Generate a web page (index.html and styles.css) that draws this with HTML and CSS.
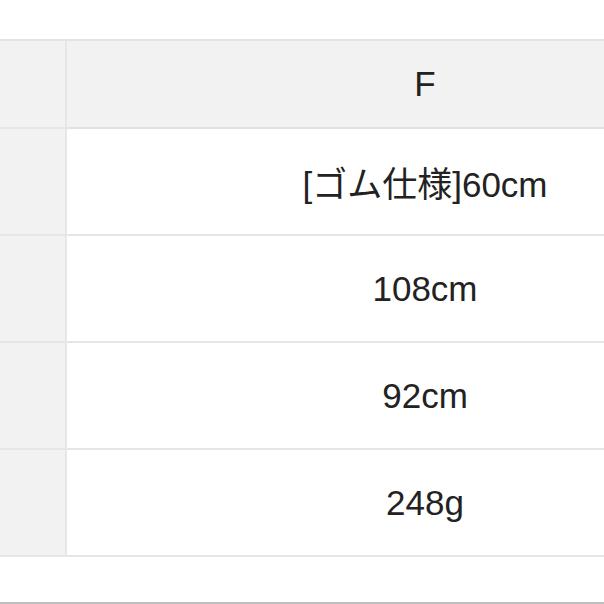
FILE: index.html
```html
<!DOCTYPE html>
<html lang="ja">
<head>
<meta charset="utf-8">
<title>サイズ表</title>
<link rel="stylesheet" href="styles.css">
</head>
<body>
<div class="page">
  <table class="size-table">
    <colgroup>
      <col class="col-label">
      <col class="col-value">
    </colgroup>
    <thead>
      <tr class="head-row">
        <th class="label"></th>
        <th class="value head">F</th>
      </tr>
    </thead>
    <tbody>
      <tr class="row">
        <th class="label"></th>
        <td class="value">[ゴム仕様]60cm</td>
      </tr>
      <tr class="row">
        <th class="label"></th>
        <td class="value">108cm</td>
      </tr>
      <tr class="row">
        <th class="label"></th>
        <td class="value">92cm</td>
      </tr>
      <tr class="row">
        <th class="label"></th>
        <td class="value">248g</td>
      </tr>
    </tbody>
  </table>
  <div class="bottom-rule"></div>
</div>
</body>
</html>
```
FILE: styles.css
```css
html, body {
  margin: 0;
  padding: 0;
  background: #ffffff;
  overflow: hidden;
}

.page {
  width: 604px;
  height: 604px;
  overflow: hidden;
  padding-top: 39px;
  box-sizing: border-box;
  display: flex;
  flex-direction: column;
  font-family: "Liberation Sans", "Noto Sans CJK JP", sans-serif;
  color: #222222;
}

.size-table {
  border-collapse: separate;
  border-spacing: 0;
  table-layout: fixed;
  width: 783px;
  flex: none;
  border-top: 2px solid #e4e4e4;
}

.col-label {
  width: 67px;
}

.col-value {
  width: 716px;
}

.label {
  background: #f2f2f2;
  border-right: 2px solid #e6e6e6;
  border-bottom: 2px solid #e6e6e6;
  padding: 0;
}

.value {
  padding: 0;
  text-align: center;
  vertical-align: middle;
  font-size: 35px;
  font-weight: normal;
  border-bottom: 2px solid #e6e6e6;
  background: #ffffff;
}

.value.head {
  background: #f2f2f2;
  border-bottom-color: #e2e2e2;
}

.head-row th {
  height: 86px;
}

.row th,
.row td {
  height: 105px;
}

.bottom-rule {
  margin-top: auto;
  height: 2px;
  background: #bdbdbd;
  flex: none;
}
```
